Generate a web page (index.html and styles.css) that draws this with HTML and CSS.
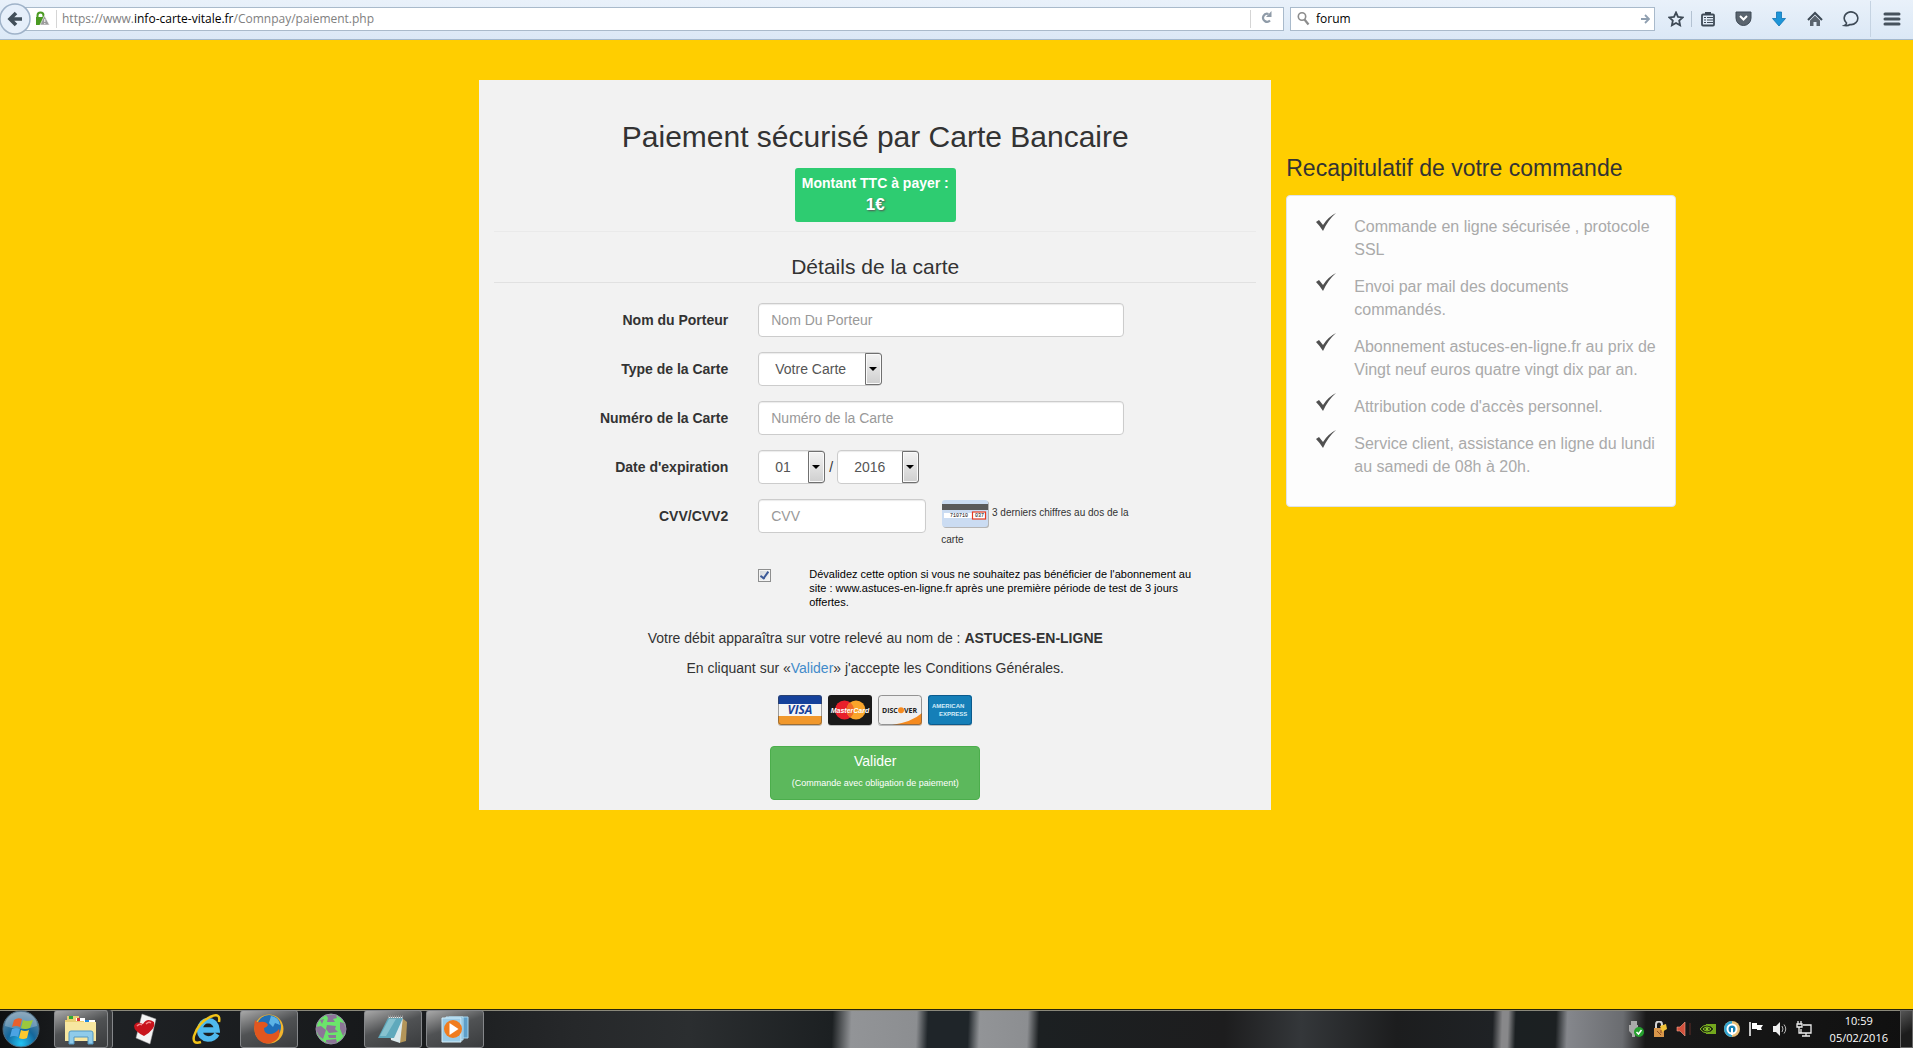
FILE: index.html
```html
<!DOCTYPE html>
<html lang="fr">
<head>
    <meta charset="UTF-8">
    <meta name="viewport" content="width=device-width, initial-scale=1.0">
    <title>Paiement sécurisé par Carte Bancaire</title>
    <link rel="stylesheet" href="styles.css">
</head>
<body>
    <!-- barre du navigateur -->
    <header class="toolbar">
        <div class="url-group">
            <button class="back" aria-label="Retour">
                <svg width="32" height="32" viewBox="0 0 32 32"><circle cx="15" cy="16" r="15" fill="#e6effa" stroke="#9fb2c8" stroke-width="1.5"/><path d="M16 10l-6 6 6 6M11 16h11" fill="none" stroke="#424f5a" stroke-width="3.6"/></svg>
            </button>
            <div class="url-bar">
                <svg class="lock" width="15" height="15" viewBox="0 0 15 15"><path d="M2.500 7V4.500a3 3 0 0 1 6 0V7" fill="none" stroke="#4a9a22" stroke-width="2"/><path d="M1 6h8v8H1z" fill="#4a9a22"/><path d="M9.500 4.500L14.500 14H5z" fill="#9a9a9a" stroke="#fff" stroke-width=".6"/><path d="M9.800 8v3M9.800 12v1" stroke="#fff"/></svg>
                <div class="url-text">https://www.<b>info-carte-vitale.fr</b>/Comnpay/paiement.php</div>
                <button class="reload" aria-label="Actualiser">
                    <svg width="12" height="13" viewBox="0 0 12 13"><path d="M7.500 3A4 4 0 1 0 9 9.500" fill="none" stroke="#8f9ba8" stroke-width="2.200"/><path d="M10.500 0v6H5z" fill="#8f9ba8"/></svg>
                </button>
            </div>
        </div>
        <div class="search-bar">
            <svg width="13" height="14" viewBox="0 0 12 14"><circle cx="4.500" cy="4.500" r="3.700" fill="none" stroke="#8c8c8c" stroke-width="1.600"/><path d="M7 7.500l4 5" stroke="#8c8c8c" stroke-width="2.200"/></svg>
            <input type="text" value="forum" aria-label="Rechercher">
            <svg width="9" height="10" viewBox="0 0 9 10"><path d="M0 5h7M4 1l4 4-4 4" fill="none" stroke="#8f9fb0" stroke-width="1.800"/></svg>
        </div>
        <div class="tool-icons">
            <button aria-label="Marque-page"><svg width="16" height="16" viewBox="0 0 16 16"><path d="M8 1.500l2 4.300 4.700.6-3.500 3.200.9 4.700L8 12l-4.100 2.300.9-4.700L1.300 6.400 6 5.800z" fill="none" stroke="#3d4955" stroke-width="1.800"/></svg></button>
            <button class="first-sep" aria-label="Liste"><svg width="16" height="16" viewBox="0 0 16 16"><rect x="2" y="3.500" width="12" height="11" rx="1" fill="none" stroke="#3d4955" stroke-width="1.800"/><path d="M5 1h6v3H5z" fill="#3d4955"/><path d="M4 6.500h2M7 6.500h6M4 9h2M7 9h6M4 11.500h2M7 11.500h6" stroke="#3d4955" stroke-width="1.200"/></svg></button>
            <button aria-label="Pocket"><svg width="17" height="16" viewBox="0 0 17 16"><path d="M1 1h15v6a7.500 7.500 0 0 1-15 0z" fill="#5a646e" stroke="#3d4955"/><path d="M5 5l3.500 3.500L12 5" fill="none" stroke="#fff" stroke-width="2"/></svg></button>
            <button aria-label="Téléchargements"><svg width="16" height="16" viewBox="0 0 16 16"><path d="M5.500 1h5v6.500h4L8 15 1.500 7.500h4z" fill="#1d95d8" stroke="#0d73b4" stroke-width=".8"/></svg></button>
            <button aria-label="Accueil"><svg width="16" height="16" viewBox="0 0 16 16"><path d="M1 9l7-7 7 7" fill="none" stroke="#3d4955" stroke-width="2"/><path d="M3 9.500l5-5 5 5V15H9.500v-4h-3v4H3z" fill="#5a646e"/></svg></button>
            <button aria-label="Messages"><svg width="18" height="16" viewBox="0 0 18 16"><path d="M4.500 12A6.800 6.300 0 1 1 8 13.500Q6 15 2.500 14.500 4.500 13.500 4.500 12z" fill="none" stroke="#3d4955" stroke-width="1.600"/></svg></button>
            <button class="menu" aria-label="Menu"><svg width="18" height="14" viewBox="0 0 18 14"><path d="M2 2h14M2 7h14M2 12h14" stroke="#46525d" stroke-width="3" stroke-linecap="round"/></svg></button>
        </div>
    </header>

    <main class="page">
        <form class="payment">
            <h1>Paiement sécurisé par Carte Bancaire</h1>
            <div class="amount">Montant TTC à payer :<span>1€</span></div>
            <hr>
            <h2>Détails de la carte</h2>

            <div class="row">
                <label for="holder">Nom du Porteur</label>
                <div class="field"><input type="text" id="holder" class="control" placeholder="Nom Du Porteur"></div>
            </div>
            <div class="row">
                <label for="type">Type de la Carte</label>
                <div class="field">
                    <div class="select type"><select id="type"><option>Votre Carte</option><option>Visa</option><option>MasterCard</option></select></div>
                </div>
            </div>
            <div class="row">
                <label for="number">Numéro de la Carte</label>
                <div class="field"><input type="text" id="number" class="control" placeholder="Numéro de la Carte"></div>
            </div>
            <div class="row">
                <label for="month">Date d'expiration</label>
                <div class="field">
                    <div class="select month"><select id="month"><option>01</option><option>02</option><option>03</option></select></div>
                    <span>/</span>
                    <div class="select year"><select aria-label="Année"><option>2016</option><option>2017</option><option>2018</option></select></div>
                </div>
            </div>
            <div class="row">
                <label for="cvv">CVV/CVV2</label>
                <div class="field cvv">
                    <input type="text" id="cvv" class="control" placeholder="CVV">
                    <div class="hint">
                        <svg width="48" height="29" viewBox="0 0 48 29"><rect x="2" y="2" width="46" height="27" rx="3" fill="#b5b5b5"/><rect x="1" y="1" width="46" height="27" rx="3" fill="#cbdcf2"/><path d="M1 5h46v6H1z" fill="#5a5a5a"/><path d="M3 14h28v5H3z" fill="#fff"/><rect x="31.500" y="13" width="13" height="7" fill="#fff" stroke="#e33a20" stroke-width="1.200"/><text x="9" y="18">710710</text><text x="34" y="18">037</text></svg>
                        <span>3 derniers chiffres au dos de la</span>
                        <span>carte</span>
                    </div>
                </div>
            </div>
            <div class="option">
                <input type="checkbox" id="subscribe" checked>
                <label for="subscribe">Dévalidez cette option si vous ne souhaitez pas bénéficier de l'abonnement au site : www.astuces-en-ligne.fr après une première période de test de 3 jours offertes.</label>
            </div>

            <p>Votre débit apparaîtra sur votre relevé au nom de : <b>ASTUCES-EN-LIGNE</b></p>
            <p>En cliquant sur «<a href="#">Valider</a>» j'accepte les Conditions Générales.</p>

            <div class="cards">
                <svg width="44" height="31" viewBox="0 0 44 31">
                    <rect y="1" width="44" height="30" rx="3" fill="#bbb"/><rect width="44" height="30" rx="3" fill="#f5f5f5"/>
                    <path d="M0 9V3a3 3 0 0 1 3-3h38a3 3 0 0 1 3 3v6z" fill="#15419b"/><path d="M0 21v6a3 3 0 0 0 3 3h38a3 3 0 0 0 3-3v-6z" fill="#f1982c"/>
                    <rect x=".5" y=".5" width="43" height="29" rx="3" fill="none" stroke="#444" stroke-opacity=".5"/>
                    <text x="22" y="19" text-anchor="middle" class="visa">VISA</text>
                </svg>
                <svg width="44" height="31" viewBox="0 0 44 31">
                    <rect y="1" width="44" height="30" rx="3" fill="#bbb"/><rect width="44" height="30" rx="3" fill="#1a1a1a"/>
                    <circle cx="16.500" cy="15" r="9.500" fill="#e8202b"/><circle cx="28" cy="15" r="9.500" fill="#f9a52b"/><path d="M22.200 7.500a9.500 9.500 0 0 1 0 15 9.500 9.500 0 0 1 0-15z" fill="#ef6a28"/>
                    <text x="22" y="18" text-anchor="middle" class="master">MasterCard</text>
                </svg>
                <svg width="44" height="31" viewBox="0 0 44 31">
                    <rect y="1" width="44" height="30" rx="3" fill="#bbb"/><rect width="44" height="30" rx="3" fill="#efefef"/>
                    <path d="M14 30Q34 27 44 18v9a3 3 0 0 1-3 3z" fill="#f58a1f"/>
                    <rect x=".5" y=".5" width="43" height="29" rx="3" fill="none" stroke="#555" stroke-opacity=".6"/>
                    <circle cx="23" cy="15.200" r="3" fill="#f58a1f"/>
                    <text x="4" y="18" class="discover">DISC</text><text x="26" y="18" class="discover">VER</text>
                </svg>
                <svg width="44" height="31" viewBox="0 0 44 31">
                    <rect y="1" width="44" height="30" rx="3" fill="#bbb"/><rect width="44" height="30" rx="3" fill="#157fb8"/>
                    <rect x=".5" y=".5" width="43" height="29" rx="3" fill="none" stroke="#0c5a8c"/>
                    <text x="4" y="13" class="amex">AMERICAN</text><text x="11" y="21" class="amex">EXPRESS</text>
                </svg>
            </div>
            <button type="submit" class="submit-button">Valider<small>(Commande avec obligation de paiement)</small></button>
        </form>

        <aside class="summary">
            <h3>Recapitulatif de votre commande</h3>
            <ul>
                <li>Commande en ligne sécurisée , protocole SSL</li>
                <li>Envoi par mail des documents commandés.</li>
                <li>Abonnement astuces-en-ligne.fr au prix de Vingt neuf euros quatre vingt dix par an.</li>
                <li>Attribution code d'accès personnel.</li>
                <li>Service client, assistance en ligne du lundi au samedi de 08h à 20h.</li>
            </ul>
        </aside>
    </main>

    <!-- barre des tâches -->
    <footer class="taskbar">
        <button class="start" aria-label="Démarrer">
            <svg width="38" height="38" viewBox="0 0 38 38">
                <defs>
                    <radialGradient id="orb" cx=".5" cy=".9" r=".9"><stop offset="0" stop-color="#22c4f5"/><stop offset=".45" stop-color="#14679c"/><stop offset="1" stop-color="#6f8fa6"/></radialGradient>
                </defs>
                <circle cx="19" cy="19" r="18" fill="url(#orb)" stroke="#4d6b80"/>
                <path d="M3 16a16 14 0 0 1 32 0q-16 6-32 0z" fill="#fff" opacity=".25"/>
                <path d="M12 10q4-3 8-1l-2 8q-4-2-8 0z" fill="#e8602c"/><path d="M21 10q4 2 10 0l-3 8q-5 2-9 0z" fill="#9bc83c"/>
                <path d="M10 19q4-2 8 0l-2 8q-4-2-8 0z" fill="#4ba3e3"/><path d="M19 20q4 2 8 0l-2 8q-4 2-8 0z" fill="#fbc82e"/>
            </svg>
        </button>
        <button class="task open stacked" aria-label="Explorateur">
            <svg width="34" height="32" viewBox="0 0 34 32"><path d="M3 3h12v4h16v20H1V7h2z" fill="#e9cf73"/><path d="M5 3h4v3H5z" fill="#2ea836"/><path d="M12 5h9v3h-9z" fill="#fff"/><path d="M13 5h3v3h-3z" fill="#d33"/><path d="M20 7h11v3H20z" fill="#fff"/><path d="M21 7h4v2h-4z" fill="#2288dd"/><path d="M1 9h31v19H1z" fill="#f7e6a0"/><path d="M5 31V20q0-2 2-2h20q2 0 2 2v11h-5v-7H10v7z" fill="#8fcbea" stroke="#5298c4"/></svg>
        </button>
        <button class="task" aria-label="Solitaire">
            <svg width="24" height="32" viewBox="0 0 24 32"><path d="M9 1l14 5-6 25L3 25z" fill="#f4f4f4" stroke="#999" stroke-width=".5"/><path d="M11 23Q1 18 1 13q2-6 9-2 4-7 11-2 2 7-10 14z" fill="#c8141c"/><path d="M4 13q3-3 5-1M13 11q3-3 5-1" stroke="#f58a8a" stroke-width="1.500" fill="none"/></svg>
        </button>
        <button class="task" aria-label="Internet Explorer">
            <svg width="30" height="32" viewBox="0 0 30 32"><path d="M25 21Q22 26 16 26 8 25 7.500 17 9 8 16 7.500 24 8 25 17H9" fill="none" stroke="#4fb9ee" stroke-width="5.500"/><path d="M9 29Q0 32 2 23 6 10 18 4 29-1 27 9" fill="none" stroke="#f2c318" stroke-width="2.500"/></svg>
        </button>
        <button class="task open" aria-label="Firefox">
            <svg width="32" height="32" viewBox="0 0 32 32"><circle cx="16" cy="16" r="14.500" fill="#f2b52c"/><circle cx="16" cy="14" r="12" fill="#1f6fb8"/><path d="M18 3q8 1 9 9l-5-2-2 4-4-4z" fill="#5cb4e6"/><path d="M2 7q2 3 5 2 6-1 8 3-2 3-4 3 0 6 6 6 5 0 9-5 2 8-4 12-8 5-15 0-8-6-5-21z" fill="#e2561f"/></svg>
        </button>
        <button class="task" aria-label="Réseau">
            <svg width="32" height="32" viewBox="0 0 32 32"><circle cx="16" cy="16" r="15" fill="#6be56b" stroke="#9a86aa"/><path d="M11 2h10l1 3-4 1 2 3h-8l1-4zM1 14l5-1 5 4-3 9q-6-3-7-12zM12 12l9 1-1 3 3 3-9 1-3-4zM25 9l4 1 2 7-3 6-3-7zM13 22h8v3h-7zM11 27l10-1 1 3q-5 3-11 0zM5 7l4-1-2 5z" fill="#8d7598"/></svg>
        </button>
        <button class="task open" aria-label="Bloc-notes">
            <svg width="32" height="32" viewBox="0 0 32 32"><path d="M25 5l5 4-1 19-7 2z" fill="#b39559"/><path d="M11 4h15l-3 26-9-3z" fill="#dbe9ec"/><path d="M11 5h15l-9 20H1z" fill="#5fa9bc"/><path d="M12 6h7l-10 17H3z" fill="#a2d4dc" opacity=".6"/><path d="M11 4h16" stroke="#999" stroke-width="3" stroke-dasharray="1 1"/></svg>
        </button>
        <button class="task open" aria-label="Lecteur">
            <svg width="28" height="28" viewBox="0 0 28 28"><path d="M8 2h19v21H8z" fill="#5e9fc9" stroke="#a9d6ef"/><path d="M5 2h17v23H5z" fill="#77b3d8" stroke="#b8e0f2"/><path d="M1 3h19v24H1z" fill="#9acbe6" stroke="#d4edf8"/><circle cx="12" cy="14" r="9" fill="#f07c1e"/><path d="M8.500 8v12l9-6z" fill="#fff"/></svg>
        </button>

        <div class="tray">
            <svg viewBox="0 0 16 16"><path d="M3 0h6v4H3zM1 4h9v6l-3 3v3H4v-3L1 10z" fill="#aaa"/><circle cx="11" cy="11" r="5" fill="#25a02d"/><path d="M8.500 11l2 2 3-4" fill="none" stroke="#fff" stroke-width="1.500"/></svg>
            <svg viewBox="0 0 16 16"><path d="M4 7V3.500a3 3 0 0 1 6 0V6" fill="none" stroke="#d5d5d5" stroke-width="2"/><path d="M2 7h10v9H2z" fill="#d8964a"/><path d="M8 5l6-2 1 5-5 3z" fill="#f1c338"/><path d="M5 10l4 4M9 9v3" stroke="#8c4d20"/></svg>
            <svg viewBox="0 0 16 16"><path d="M1 6h3l5-5v14l-5-5H1z" fill="#d2513c" stroke="#f3a18c" stroke-width=".6"/><path d="M14 2v12" stroke="#612d26"/></svg>
            <svg viewBox="0 0 16 16"><path d="M6 3h10v10H6z" fill="#73a81d"/><path d="M0 8q3-4 7-4t7 4q-3 4-7 4T0 8z" fill="#1f270e" stroke="#7fb526"/><path d="M3 8q4-4 8 0-4 4-8 0z" fill="none" stroke="#8ccb29"/><circle cx="7" cy="8" r="1.500" fill="#8ccb29"/></svg>
            <svg viewBox="0 0 16 16"><circle cx="8" cy="8" r="8" fill="#e8bf78"/><path d="M8 0a8 8 0 1 0 0 16z" fill="#31a5d1"/><circle cx="8" cy="8" r="4.500" fill="#1682b4" stroke="#fff" stroke-width="2"/><path d="M8 7v7" stroke="#fff" stroke-width="2"/></svg>
            <svg viewBox="0 0 16 16"><path d="M2 1v14" stroke="#fff" stroke-width="1.500"/><path d="M4 2h5v2h6l-2 3 1 2H9V8H4z" fill="#fff"/></svg>
            <svg viewBox="0 0 16 16"><path d="M1 5h3l4-4v14l-4-4H1z" fill="#eee"/><path d="M10 5q2 3 0 6M12 3.500q3.500 4.500 0 9" fill="none" stroke="#bbb"/></svg>
            <svg viewBox="0 0 16 16"><path d="M7 4h8v8H5V8M10 12v3M6 15h8M3 6v6h2M2 0v3M5 0v3M1 3h5v3H1z" fill="none" stroke="#eee" stroke-width="1.300"/></svg>
        </div>
        <div class="clock">10:59<br>05/02/2016</div>
        <button class="show-desktop" aria-label="Bureau"></button>
    </footer>
</body>
</html>
```
FILE: styles.css
```css
*, *::before, *::after {
    box-sizing: border-box;
}
body {
    font-family: Arial, "Liberation Sans", sans-serif;
    font-size: 14px;
    line-height: 20px;
    color: #333;
    background-color: #ffce00;
    margin: 0;
    min-height: 100vh;
    display: flex;
    flex-direction: column;
}
button {
    border: 0;
    padding: 0;
    background: none;
    cursor: pointer;
}
svg {
    flex: none;
}

/* navigateur */
.toolbar {
    display: flex;
    align-items: center;
    height: 40px;
    padding-bottom: 2px;
    background: linear-gradient(#e9f1fa, #dbe8f6);
    border-bottom: 1px solid #a3b8cd;
    font-family: "Open Sans", sans-serif;
    font-size: 12px;
}
.url-group {
    flex: 1;
    display: flex;
    align-items: center;
}
.back {
    z-index: 1;
    height: 32px;
}
.back svg {
    display: block;
}
.url-bar, .search-bar {
    display: flex;
    align-items: center;
    height: 24px;
    background-color: #fff;
    border: 1px solid #a9bacb;
}
.url-bar {
    flex: 1;
    margin-left: -8px;
    padding-left: 10px;
}
.url-text {
    flex: 1;
    margin-left: 6px;
    padding-left: 5px;
    border-left: 1px solid #d5d5d5;
    line-height: 18px;
    color: #808080;
}
.url-text b {
    font-weight: normal;
    color: #000;
}
.reload {
    width: 33px;
    height: 18px;
    border-left: 1px solid #d5d5d5;
}
.search-bar {
    width: 365px;
    margin: 0 12px 0 6px;
    padding: 0 4px 0 6px;
}
.search-bar input {
    flex: 1;
    border: 0;
    outline: 0;
    padding: 0 6px;
    font: inherit;
}
.tool-icons {
    display: flex;
}
.tool-icons button {
    width: 36px;
    height: 36px;
    display: flex;
    align-items: center;
    justify-content: center;
}
.tool-icons button:first-child {
    width: 18px;
    margin-right: 6px;
}
.tool-icons .first-sep {
    width: 34px;
    background: linear-gradient(#b3c2d2, #b3c2d2) 0 50% / 1px 16px no-repeat;
}
.tool-icons .menu {
    width: 43px;
    margin-left: 1px;
    border-left: 1px solid #c5d3e2;
}

/* formulaire */
.page {
    flex: 1;
    display: flex;
    align-items: flex-start;
    padding: 40px 0 0 calc(25% + 1px);
}
.payment {
    width: 792px;
    padding: 40px 15px 10px;
    background-color: #f2f2f2;
    text-align: center;
}
h1, h2, h3 {
    font-weight: normal;
    margin: 0;
}
h1 {
    font-size: 30px;
    line-height: 34px;
}
.amount {
    width: 161px;
    margin: 14px auto 9px;
    padding: 4px 0 6px;
    border-radius: 3px;
    background-color: #2ecc71;
    color: #fff;
    font-weight: bold;
    line-height: 22px;
    white-space: nowrap;
}
.amount span {
    display: block;
    font-size: 17px;
    text-shadow: 1px 1px 2px #555;
}
hr {
    margin: 0;
    border: 0;
    border-top: 1px solid #eaeaea;
}
h2 {
    margin: 20px 0;
    border-bottom: 1px solid #e1e1e1;
    font-size: 21px;
    line-height: 30px;
}
.row {
    display: flex;
    margin-bottom: 15px;
}
.row > label {
    width: 234px;
    margin-right: 30px;
    line-height: 34px;
    font-weight: bold;
    text-align: right;
}
.field {
    width: 366px;
    display: flex;
    align-items: center;
    gap: 4px;
}
.control, .select select {
    width: 100%;
    height: 34px;
    padding: 6px 12px;
    border: 1px solid #ccc;
    border-radius: 4px;
    background-color: #fff;
    box-shadow: inset 0 1px 1px rgba(0, 0, 0, 0.08);
    font: inherit;
    color: #555;
}
.control::placeholder {
    color: #999;
}
.select {
    position: relative;
}
.select select {
    appearance: none;
    padding: 6px 16px;
}
.select::before {
    content: "";
    position: absolute;
    top: 1px;
    right: 0;
    width: 17px;
    height: 32px;
    border: 1px solid #707070;
    border-radius: 0 3px 3px 0;
    background: linear-gradient(#f3f3f3, #cfcfcf);
    box-shadow: inset 0 0 0 1px #fafafa;
    pointer-events: none;
}
.select::after {
    content: "";
    position: absolute;
    top: 15px;
    right: 5px;
    border: 4px solid transparent;
    border-top-color: #000;
    border-bottom: 0;
    pointer-events: none;
}
.type {
    width: 124px;
}
.month {
    width: 67px;
}
.year {
    width: 82px;
}
.cvv {
    align-items: flex-start;
    gap: 15px;
}
.cvv .control {
    flex: none;
    width: 168px;
}
.hint {
    flex: none;
    width: 190px;
    font-size: 10px;
    line-height: 24px;
    text-align: left;
}
.hint svg {
    vertical-align: middle;
}
.hint text {
    font: 5px "Liberation Mono", monospace;
}
.option {
    display: flex;
    align-items: flex-start;
    margin: 0 59px 0 264px;
}
.option input {
    appearance: none;
    flex: none;
    width: 13px;
    height: 13px;
    margin: 2px 38px 0 0;
    border: 1px solid #8e8f8f;
    background: linear-gradient(135deg, #cfd4da, #f8f8f8);
    box-shadow: inset 0 0 0 1px #f4f4f4;
}
.option input:checked::before {
    content: "";
    display: block;
    width: 5px;
    height: 9px;
    margin-left: 3px;
    border: solid #3b5998;
    border-width: 0 2px 2px 0;
    transform: rotate(35deg);
}
.option label {
    font-size: 11px;
    line-height: 14px;
    color: #000;
    text-align: left;
}
p {
    margin: 0 0 10px;
}
.option + p {
    margin-top: 19px;
}
a {
    color: #428bca;
    text-decoration: none;
}
.cards {
    display: flex;
    justify-content: center;
    gap: 6px;
    margin: 17px 0 20px;
}
.visa {
    font: italic bold 12px "Open Sans", sans-serif;
    fill: #15419b;
}
.master {
    font: italic bold 7px Arial, sans-serif;
    fill: #fff;
}
.discover {
    font: bold 7px "Open Sans", sans-serif;
    fill: #222;
}
.amex {
    font: bold 6px Arial, sans-serif;
    fill: #d5edf8;
}
.submit-button {
    width: 210px;
    height: 54px;
    border: 1px solid #4cae4c;
    border-radius: 4px;
    background-color: #5cb85c;
    color: #fff;
    font: 14px/20px Arial, "Liberation Sans", sans-serif;
}
.submit-button small {
    display: block;
    font-size: 9px;
    line-height: 24px;
}

/* récapitulatif */
.summary {
    width: 390px;
    margin: 74px 0 0 15px;
}
h3 {
    font-size: 23px;
    line-height: 28px;
}
.summary ul {
    list-style: none;
    margin: 13px 0 0;
    padding: 17px 16px 16px 29px;
    border: 1px solid #dfe3ea;
    border-radius: 4px;
    background-color: #fdfdfd;
    color: #aaa;
    font-size: 16px;
    line-height: 23px;
}
.summary li {
    margin-bottom: 12px;
    padding: 2px 0 0 38px;
    background: url("data:image/svg+xml,%3Csvg xmlns='http://www.w3.org/2000/svg' width='20' height='18'%3E%3Cpath d='M0 9l3-2 4 5Q12 4 20 0 12 7 7 18 4 13 0 9z' fill='%23505050'/%3E%3C/svg%3E") 0 0 no-repeat;
}

/* barre des tâches */
.taskbar {
    display: flex;
    align-items: center;
    height: 39px;
    border-top: 1px solid #2a2508;
    box-shadow: inset 0 1px #8a887a;
    background: linear-gradient(92deg, #0e0f10, #1f2225 5%, #17191b 20%, #26282a 30%, #2b2e30 36%, #1c2022 43.5%, #929497 44.5%, #8c8e91 47.9%, #1f2529 48.5%, #1f2529 50.6%, #929497 51.2%, #8c8e91 53.7%, #1c2022 54.3%, #1d1d1e 64%, #34373a 68%, #1c1d1e 73%, #1f2225 78%, #88888a 78.5%, #88888a 78.8%, #1b2022 79.2%, #1c2022 81.3%, #85878c 81.9%, #6a6c70 84.8%, #191919 86%, #101010);
}
.start {
    width: 38px;
    height: 38px;
    margin: 0 14px 0 2px;
}
.start svg {
    display: block;
}
.task {
    width: 58px;
    height: 38px;
    margin-right: 4px;
    display: flex;
    align-items: center;
    justify-content: center;
}
.open {
    border: 1px solid #85878a;
    border-radius: 3px;
    background: linear-gradient(160deg, #a9a9a9, #505254 45%, #3a3c3e);
}
.stacked {
    width: 54px;
    margin-right: 8px;
    box-shadow: 4px 0 #3a3c3e, 5px 0 #85878a;
}
.tray {
    display: flex;
    gap: 8px;
    margin-left: auto;
}
.tray svg {
    width: 16px;
    height: 16px;
}
.clock {
    margin: 0 12px 0 18px;
    color: #fff;
    font: 11px/17px "Open Sans", sans-serif;
    text-align: center;
}
.show-desktop {
    width: 13px;
    height: 38px;
    border: 1px solid #666;
    background: linear-gradient(150deg, #555, #1c1c1c 60%);
}
```
